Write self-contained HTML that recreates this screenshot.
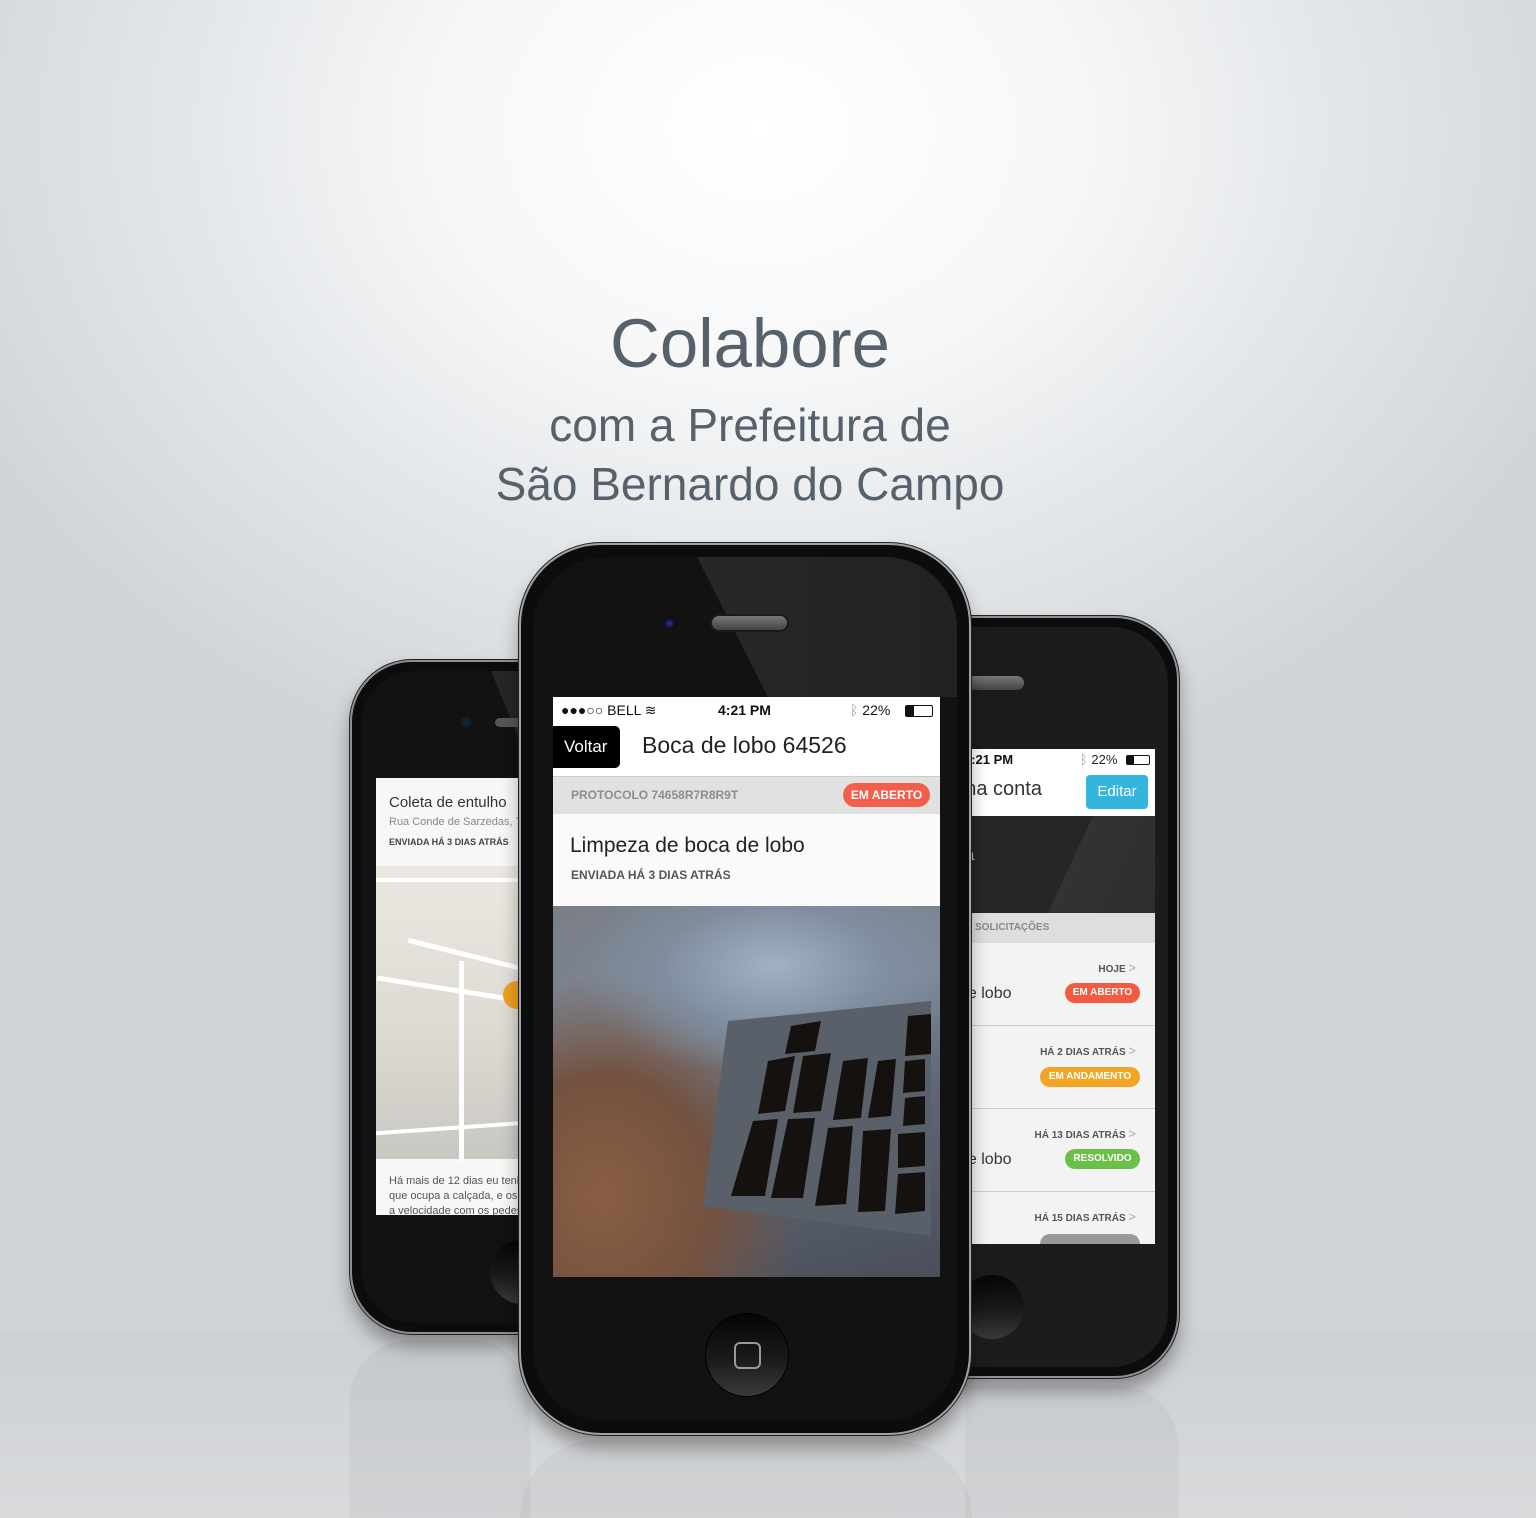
<!DOCTYPE html>
<html><head><meta charset="utf-8">
<style>
*{margin:0;padding:0;box-sizing:border-box}
body{width:1536px;height:1518px;overflow:hidden;position:relative;font-family:"Liberation Sans",sans-serif;
background:radial-gradient(ellipse 900px 700px at 760px 130px,#ffffff 0%,#f6f7f8 35%,#e3e6e9 65%,#cfd3d7 100%);}
.floor{position:absolute;left:0;top:1330px;width:1536px;height:188px;background:linear-gradient(#cdd0d3,#d8dadc)}
.t{position:absolute;left:0;width:1500px;text-align:center;color:#56616c;font-weight:300}
.phone{position:absolute;background:#0c0c0c;border:2px solid #8d8f92;box-shadow:0 0 0 1px #222,0 12px 18px rgba(0,0,0,.35)}
.inner{position:absolute;background:#121212;overflow:hidden}
.scr{position:absolute;background:#fff;overflow:hidden}
.sb{position:absolute;font-size:14px;color:#111}
.pill{position:absolute;color:#fff;font-weight:bold;border-radius:12px;text-align:center}
.home{position:absolute;border-radius:50%;background:linear-gradient(#050505,#1a1a1a 55%,#3a3a3a)}
.home i{position:absolute;border:2px solid #999;border-radius:6px}
.refl{position:absolute;opacity:.035;background:#000}
</style></head><body>
<div class="floor"></div>
<div class="t" style="top:304px;font-size:69px">Colabore</div>
<div class="t" style="top:398px;font-size:46px">com a Prefeitura de</div>
<div class="t" style="top:457px;font-size:46px">São Bernardo do Campo</div>

<div class="refl" style="left:350px;top:1340px;width:180px;height:178px;border-radius:60px 60px 0 0"></div>
<div class="refl" style="left:520px;top:1440px;width:452px;height:78px;border-radius:80px 80px 0 0"></div>
<div class="refl" style="left:965px;top:1385px;width:213px;height:133px;border-radius:0 60px 0 0"></div>

<!-- left phone -->
<div class="phone" style="left:350px;top:660px;width:240px;height:674px;border-radius:62px">
  <div class="inner" style="left:9px;top:9px;right:9px;bottom:9px;border-radius:54px">
    <div style="position:absolute;left:0;top:0;width:100%;height:110px;background:#262626;clip-path:polygon(130px 0,100% 0,100% 100%,175px 100%)"></div>
  </div>
  <div style="position:absolute;left:109px;top:55px;width:10px;height:10px;border-radius:50%;background:#123"></div>
  <div style="position:absolute;left:143px;top:56px;width:60px;height:9px;border-radius:5px;background:#555"></div>
  <div class="scr" style="left:24px;top:116px;width:150px;height:437px;background:#f7f7f7">
    <div style="position:absolute;left:13px;top:16px;font-size:15px;color:#333;white-space:nowrap">Coleta de entulho</div>
    <div style="position:absolute;left:13px;top:38px;font-size:11px;color:#888;white-space:nowrap">Rua Conde de Sarzedas, 7</div>
    <div style="position:absolute;left:13px;top:59px;font-size:9px;font-weight:bold;color:#444;white-space:nowrap">ENVIADA HÁ 3 DIAS ATRÁS</div>
    <div style="position:absolute;left:0;top:88px;width:150px;height:293px;background:linear-gradient(#ebe8e1,#dcd9d2 60%,#c9c7c2)">
      <div style="position:absolute;left:0;top:12px;width:150px;height:4px;background:#fff"></div>
      <div style="position:absolute;left:0;top:122px;width:160px;height:5px;background:#fff;transform:rotate(9deg)"></div>
      <div style="position:absolute;left:30px;top:90px;width:150px;height:5px;background:#fff;transform:rotate(14deg)"></div>
      <div style="position:absolute;left:83px;top:95px;width:5px;height:200px;background:#fff"></div>
      <div style="position:absolute;left:0;top:260px;width:150px;height:4px;background:#fff;transform:rotate(-4deg)"></div>
      <div style="position:absolute;left:127px;top:115px;width:28px;height:28px;border-radius:50%;background:#f0a020"></div>
    </div>
    <div style="position:absolute;left:13px;top:396px;font-size:11px;line-height:15px;color:#555;white-space:nowrap">Há mais de 12 dias eu tenh<br>que ocupa a calçada, e os m<br>a velocidade com os pedes</div>
  </div>
  <div class="home" style="left:138px;top:578px;width:64px;height:64px"></div>
</div>

<!-- right phone -->
<div class="phone" style="left:900px;top:616px;width:279px;height:762px;border-radius:64px">
  <div class="inner" style="left:9px;top:9px;right:9px;bottom:9px;border-radius:56px;background:#1c1c1c"></div>
  <div style="position:absolute;left:60px;top:58px;width:62px;height:14px;border-radius:7px;background:linear-gradient(#777,#444)"></div>
  <div class="scr" style="left:60px;top:131px;width:193px;height:495px;background:#f3f3f3">
    <div style="position:absolute;left:0;top:0;width:193px;height:67px;background:#fff"></div>
    <div class="sb" style="left:2px;top:3px;font-weight:bold;font-size:13px">4:21 PM</div>
    <div class="sb" style="left:118px;top:3px;font-size:13px;color:#999">ᛒ <span style="color:#222">22%</span></div>
    <div style="position:absolute;left:164px;top:6px;width:24px;height:10px;border:1.5px solid #111;border-radius:2px"><div style="width:7px;height:100%;background:#111"></div></div>
    <div style="position:absolute;left:-29px;top:29px;font-size:20px;color:#333;font-weight:300">Minha conta</div>
    <div style="position:absolute;left:124px;top:26px;width:62px;height:34px;background:#33b5dd;border-radius:4px;color:#fff;font-size:15px;text-align:center;line-height:34px">Editar</div>
    <div style="position:absolute;left:0;top:67px;width:193px;height:97px;background:linear-gradient(115deg,#262626 0,#262626 55%,#333 55%,#2e2e2e)"></div>
    <div style="position:absolute;left:-2px;top:98px;color:#ccc;font-size:16px">ra</div>
    <div style="position:absolute;left:0;top:164px;width:193px;height:30px;background:#dedede;font-size:10px;color:#888;font-weight:bold;line-height:30px;padding-left:13px">SOLICITAÇÕES</div>
    <div style="position:absolute;left:0;top:276px;width:193px;height:1px;background:#ccc"></div>
    <div style="position:absolute;left:0;top:359px;width:193px;height:1px;background:#ccc"></div>
    <div style="position:absolute;left:0;top:442px;width:193px;height:1px;background:#ccc"></div>
    <div style="position:absolute;right:19px;top:211px;font-size:10px;font-weight:bold;color:#555">HOJE <span style="color:#aaa;font-weight:normal;font-size:13px">&gt;</span></div>
    <div style="position:absolute;left:-3px;top:236px;font-size:16px;color:#333">de lobo</div>
    <div class="pill" style="left:103px;top:234px;width:75px;height:20px;background:#f45a42;font-size:10px;line-height:20px">EM ABERTO</div>
    <div style="position:absolute;right:19px;top:294px;font-size:10px;font-weight:bold;color:#555">HÁ 2 DIAS ATRÁS <span style="color:#aaa;font-weight:normal;font-size:13px">&gt;</span></div>
    <div class="pill" style="left:78px;top:318px;width:100px;height:20px;background:#f2a524;font-size:10px;line-height:20px">EM ANDAMENTO</div>
    <div style="position:absolute;right:19px;top:377px;font-size:10px;font-weight:bold;color:#555">HÁ 13 DIAS ATRÁS <span style="color:#aaa;font-weight:normal;font-size:13px">&gt;</span></div>
    <div style="position:absolute;left:-3px;top:402px;font-size:16px;color:#333">de lobo</div>
    <div class="pill" style="left:103px;top:400px;width:75px;height:20px;background:#6cc04a;font-size:10px;line-height:20px">RESOLVIDO</div>
    <div style="position:absolute;right:19px;top:460px;font-size:10px;font-weight:bold;color:#555">HÁ 15 DIAS ATRÁS <span style="color:#aaa;font-weight:normal;font-size:13px">&gt;</span></div>
    <div class="pill" style="left:78px;top:485px;width:100px;height:20px;background:#999"></div>
  </div>
  <div class="home" style="left:58px;top:657px;width:64px;height:64px"></div>
</div>

<!-- center phone -->
<div class="phone" style="left:519px;top:543px;width:452px;height:892px;border-radius:82px;border-color:#a0a2a5">
  <div class="inner" style="left:12px;top:12px;right:12px;bottom:12px;border-radius:72px;background:#121212">
    <div style="position:absolute;left:0;top:0;width:100%;height:140px;background:linear-gradient(90deg,#2b2b2b,#222);clip-path:polygon(164px 0,100% 0,100% 100%,235px 100%)"></div>
  </div>
  <div style="position:absolute;left:142px;top:72px;width:13px;height:13px;border-radius:50%;background:radial-gradient(#2a3a8a,#0a0a20 60%,#222)"></div>
  <div style="position:absolute;left:189px;top:69px;width:79px;height:18px;border-radius:9px;background:linear-gradient(#777,#444);border:2px solid #1a1a1a"></div>
  <div class="scr" style="left:32px;top:152px;width:387px;height:580px">
    <div class="sb" style="left:8px;top:5px">●●●○○ BELL ≋</div>
    <div class="sb" style="left:165px;top:5px;font-weight:bold">4:21 PM</div>
    <div class="sb" style="left:297px;top:5px"><span style="color:#999">ᛒ</span> 22%</div>
    <div style="position:absolute;left:352px;top:8px;width:28px;height:12px;border:1.5px solid #111;border-radius:2px"><div style="width:8px;height:100%;background:#111"></div></div>
    <div style="position:absolute;left:0;top:29px;width:67px;height:42px;background:#000;border-radius:0 5px 5px 0;color:#fff;font-size:17px;line-height:42px;padding-left:11px">Voltar</div>
    <div style="position:absolute;left:89px;top:35px;font-size:23px;color:#222;font-weight:300">Boca de lobo 64526</div>
    <div style="position:absolute;left:0;top:79px;width:387px;height:38px;background:#e1e1e1;border-top:1px solid #ccc"></div>
    <div style="position:absolute;left:18px;top:91px;font-size:12px;font-weight:bold;color:#8d8d8d">PROTOCOLO 74658R7R8R9T</div>
    <div class="pill" style="left:290px;top:86px;width:87px;height:24px;background:#f25e4a;font-size:12px;line-height:24px">EM ABERTO</div>
    <div style="position:absolute;left:0;top:117px;width:387px;height:92px;background:#fafafa"></div>
    <div style="position:absolute;left:17px;top:137px;font-size:21px;color:#222;font-weight:300">Limpeza de boca de lobo</div>
    <div style="position:absolute;left:18px;top:171px;font-size:12px;font-weight:bold;color:#555">ENVIADA HÁ 3 DIAS ATRÁS</div>
    <div style="position:absolute;left:0;top:209px;width:387px;height:371px;overflow:hidden;
      background:radial-gradient(ellipse 200px 110px at 220px 60px,#a2b2c2 0%,rgba(130,148,168,.6) 55%,transparent 100%),
      radial-gradient(ellipse 200px 220px at 50px 290px,#8a5e44 0%,#735240 55%,transparent 100%),
      linear-gradient(165deg,#7a7e86 0%,#7d8898 35%,#5e6676 60%,#4a4e5a 100%)">
      <svg width="387" height="371" style="position:absolute;left:0;top:0">
        <polygon points="175,115 378,95 378,330 150,300" fill="#5a606a"/>
        <g fill="#15110f">
          <polygon points="215,155 242,150 232,205 205,208"/>
          <polygon points="250,150 278,147 268,205 240,207"/>
          <polygon points="290,155 315,152 308,212 280,214"/>
          <polygon points="325,155 343,153 338,210 315,212"/>
          <polygon points="352,155 372,153 372,185 350,187"/>
          <polygon points="352,192 372,190 372,218 350,220"/>
          <polygon points="200,215 225,213 212,290 178,290"/>
          <polygon points="235,213 262,212 250,292 218,292"/>
          <polygon points="275,222 300,220 293,298 262,300"/>
          <polygon points="310,225 338,223 332,305 305,306"/>
          <polygon points="345,228 372,226 372,260 345,262"/>
          <polygon points="345,268 372,266 372,305 342,308"/>
          <polygon points="238,120 268,115 262,145 232,148"/>
          <polygon points="355,110 378,108 378,148 352,150"/>
        </g>
      </svg>
    </div>
  </div>
  <div class="home" style="left:184px;top:768px;width:84px;height:84px;border:1px solid #000">
    <i style="left:28px;top:28px;width:27px;height:27px"></i>
  </div>
</div>
</body></html>
